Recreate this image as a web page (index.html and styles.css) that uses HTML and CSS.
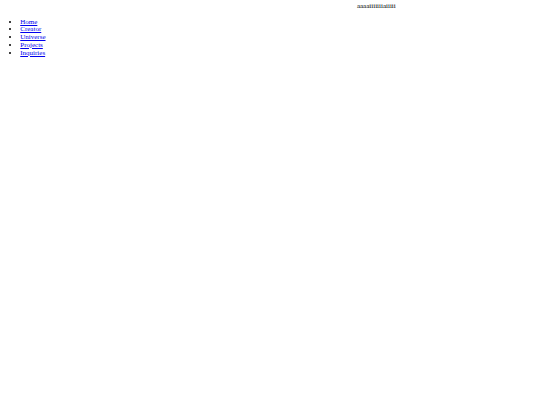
FILE: index.html
```html
<!DOCTYPE html>
<html>
<head>
<meta charset="utf-8">
<link rel="stylesheet" href="styles.css">
</head>
<body>
<div class="banner">aaaaiiiiiiiaiiiii</div>
<ul class="nav">
<li><a href="#">Home</a></li>
<li><a href="#">Creator</a></li>
<li><a href="#">Universe</a></li>
<li><a href="#">Projects</a></li>
<li><a href="#">Inquiries</a></li>
</ul>
</body>
</html>
```
FILE: styles.css
```css
body {
  margin: 3.375px;
  font-family: "Liberation Serif", serif;
  font-size: 7px;
  line-height: 7.76px;
  background: #fff;
  color: #000;
}
.banner {
  padding-left: 353.5px;
}
.nav {
  margin: 7.5px 0;
  padding-left: 16.875px;
}
.nav a {
  color: #0000ee;
}
```
